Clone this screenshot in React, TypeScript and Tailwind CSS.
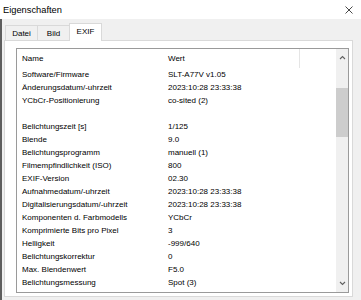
const rows: [string, string][] = [
  ["Software/Firmware", "SLT-A77V v1.05"],
  ["Änderungsdatum/-uhrzeit", "2023:10:28 23:33:38"],
  ["YCbCr-Positionierung", "co-sited (2)"],
  ["", ""],
  ["Belichtungszeit [s]", "1/125"],
  ["Blende", "9.0"],
  ["Belichtungsprogramm", "manuell (1)"],
  ["Filmempfindlichkeit (ISO)", "800"],
  ["EXIF-Version", "02.30"],
  ["Aufnahmedatum/-uhrzeit", "2023:10:28 23:33:38"],
  ["Digitalisierungsdatum/-uhrzeit", "2023:10:28 23:33:38"],
  ["Komponenten d. Farbmodells", "YCbCr"],
  ["Komprimierte Bits pro Pixel", "3"],
  ["Helligkeit", "-999/640"],
  ["Belichtungskorrektur", "0"],
  ["Max. Blendenwert", "F5.0"],
  ["Belichtungsmessung", "Spot (3)"],
];

function Tab({ label, active }: { label: string; active?: boolean }) {
  if (active) {
    return (
      <div className="relative z-10 -mb-px flex h-[18px] w-[33px] items-start justify-center border border-b-0 border-[#d9d9d9] bg-white pt-[3px] text-[8px] leading-[9px]">
        {label}
      </div>
    );
  }
  return (
    <div className="flex h-[15px] w-[33px] items-center justify-center border border-b-0 border-[#d9d9d9] bg-[#f0f0f0] text-[8px] leading-[9px] -mr-px">
      {label}
    </div>
  );
}

export default function App() {
  return (
    <div className="relative flex h-[300px] w-[361px] flex-col overflow-hidden bg-[#f0f0f0] font-['Liberation_Sans',Arial,sans-serif] text-black">
      <div className="flex h-[19px] shrink-0 items-center justify-between bg-white pl-[3px] pr-[8px]">
        <span className="text-[9.3px] leading-[10px]">Eigenschaften</span>
        <svg width="8" height="8" viewBox="0 0 8 8" className="mt-px">
          <path d="M0.5 0.5L7.5 7.5M7.5 0.5L0.5 7.5" stroke="#333" strokeWidth="0.9" fill="none" />
        </svg>
      </div>

      <div className="flex flex-1">
        <div className="w-[2px] bg-[#5e5e5e]" />
        <div className="ml-[2px] flex w-[349px] flex-col">
          <div className="flex h-[21px] items-end pl-[1px]">
            <Tab label="Datei" />
            <Tab label="Bild" />
            <Tab label="EXIF" active />
          </div>

          <div className="h-[257px] border border-[#d9d9d9] bg-white pl-[11px] pt-[7px]">
            <div className="flex h-[245px] w-[333px] border border-[#9a9a9a] bg-white">
              <div className="flex-1 overflow-hidden text-[8px]">
                <div className="flex h-[19px] items-center">
                  <div className="w-[151px] pl-[5px]">Name</div>
                  <div className="h-full w-[132px] border-r border-[#e5e5e5] leading-[19px]">Wert</div>
                </div>
                {rows.map(([name, value], i) => (
                  <div key={i} className="flex h-[13px] items-center leading-[13px]">
                    <div className="w-[151px] whitespace-nowrap pl-[5px]">{name}</div>
                    <div className="whitespace-nowrap">{value}</div>
                  </div>
                ))}
              </div>
              <div className="flex w-[12px] flex-col bg-[#f0f0f0]">
                <div className="flex h-[17px] items-center justify-center">
                  <svg width="7" height="5" viewBox="0 0 7 5">
                    <path d="M1 4L3.5 1.5L6 4" stroke="#606060" strokeWidth="1.1" fill="none" />
                  </svg>
                </div>
                <div className="mt-[22px] h-[49px] bg-[#cdcdcd]" />
                <div className="flex-1" />
                <div className="flex h-[17px] items-center justify-center">
                  <svg width="7" height="5" viewBox="0 0 7 5">
                    <path d="M1 1L3.5 3.5L6 1" stroke="#606060" strokeWidth="1.1" fill="none" />
                  </svg>
                </div>
              </div>
            </div>
          </div>
        </div>
      </div>
    </div>
  );
}
